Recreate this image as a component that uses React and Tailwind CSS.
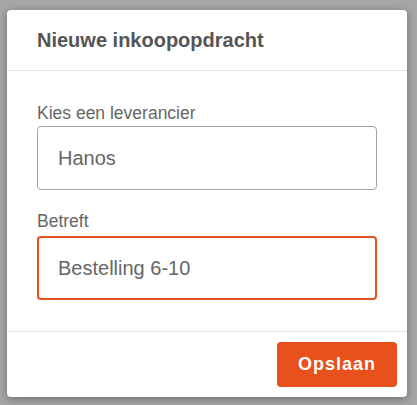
import React from 'react';

const Field = ({ label, value, active, className = '', labelGap = 'mb-[2px]' }) => (
  <div className={className}>
    <label className={`block text-[17.5px] leading-[22px] text-[#666] ${labelGap}`}>{label}</label>
    <div
      className={`h-[64px] rounded-[4px] flex items-center ${
        active ? 'border-2 border-[#e8501c] pl-[19px]' : 'border border-[#a3a3a3] pl-[20px]'
      }`}
    >
      <span className="text-[20px] text-[#666]">{value}</span>
    </div>
  </div>
);

const App = () => {
  return (
    <div
      className="w-[417px] h-[405px] bg-[#a6a6a6] pt-[10px] pl-[7px]"
      style={{ fontFamily: '"Liberation Sans", Arial, sans-serif' }}
    >
      <div className="w-[400px] h-[387px] bg-white rounded-[4px] shadow-[0_2px_8px_rgba(0,0,0,0.35)] flex flex-col">
        <div className="h-[61px] px-[30px] flex items-center border-b border-[#e5e5e5]">
          <h2 className="text-[20px] font-bold text-[#555]">Nieuwe inkoopopdracht</h2>
        </div>
        <div className="flex-1 px-[30px] pt-[31px]">
          <Field label="Kies een leverancier" value="Hanos" />
          <Field label="Betreft" value="Bestelling 6-10" active className="mt-[20px]" labelGap="mb-[4px]" />
        </div>
        <div className="h-[66px] border-t border-[#e5e5e5] flex justify-end pt-[10px] pr-[10px]">
          <button className="w-[120px] h-[45px] rounded-[4px] bg-[#e8501c] text-white font-bold text-[18px] tracking-[1px]">
            Opslaan
          </button>
        </div>
      </div>
    </div>
  );
};

export default App;
